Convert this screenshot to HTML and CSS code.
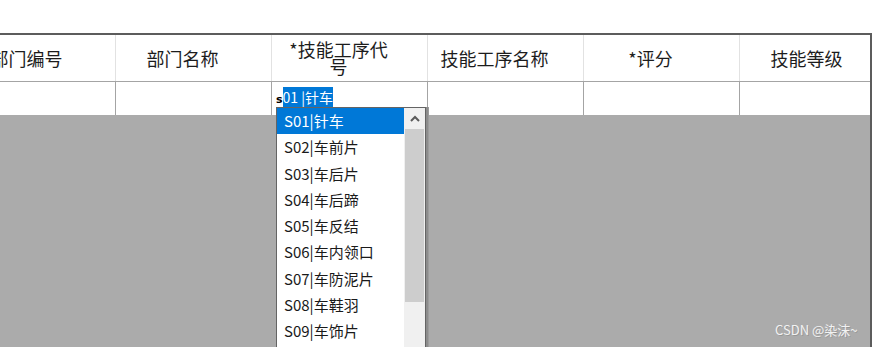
FILE: index.html
```html
<!DOCTYPE html>
<html lang="zh-CN">
<head>
<meta charset="utf-8">
<title>技能工序</title>
<link rel="stylesheet" href="styles.css">
</head>
<body>
<div class="top"></div>
<div class="grid">
  <div class="row head">
    <div class="cell"><span class="htext">部门编号</span></div>
    <div class="cell"><span class="htext">部门名称</span></div>
    <div class="cell"><span class="htext two"><span class="line">*技能工序代</span><span class="line">号</span></span></div>
    <div class="cell"><span class="htext">技能工序名称</span></div>
    <div class="cell"><span class="htext">*评分</span></div>
    <div class="cell"><span class="htext">技能等级</span></div>
  </div>
  <div class="row data">
    <div class="cell"></div>
    <div class="cell"></div>
    <div class="cell edit"><span class="typed">s</span><span class="sel">01 |针车</span></div>
    <div class="cell"></div>
    <div class="cell"></div>
    <div class="cell"></div>
  </div>
  <div class="dropdown">
    <ul class="list">
      <li class="item active">S01|针车</li>
      <li class="item">S02|车前片</li>
      <li class="item">S03|车后片</li>
      <li class="item">S04|车后蹄</li>
      <li class="item">S05|车反结</li>
      <li class="item">S06|车内领口</li>
      <li class="item">S07|车防泥片</li>
      <li class="item">S08|车鞋羽</li>
      <li class="item">S09|车饰片</li>
    </ul>
    <div class="scrollbar">
      <div class="up">
        <svg width="10" height="7" viewBox="0 0 10 7"><polyline points="1,6 5,2 9,6" fill="none" stroke="#5a5a5a" stroke-width="2"/></svg>
      </div>
      <div class="thumb"></div>
    </div>
  </div>
  <div class="watermark">CSDN @染沫~</div>
</div>
</body>
</html>
```

FILE: styles.css
```css
html, body {
  margin: 0;
  padding: 0;
}
body {
  width: 873px;
  height: 347px;
  overflow: hidden;
  background: #ffffff;
  font-family: "Noto Sans CJK SC", "Noto Sans", sans-serif;
}
.top {
  height: 33px;
  background: #ffffff;
}
.grid {
  position: relative;
  width: 872px;
  height: 314px;
  box-sizing: border-box;
  border-top: 2px solid #5c5c5c;
  border-right: 2px solid #5c5c5c;
  background: #ababab;
  overflow: hidden;
}
.row {
  display: flex;
  margin-left: -40px;
  background: #ffffff;
}
.cell {
  flex: 0 0 156px;
  box-sizing: border-box;
}
.head {
  height: 47px;
  border-bottom: 1px solid #a4a4a4;
  box-sizing: border-box;
}
.head .cell {
  border-right: 1px solid #e2e2e2;
  display: flex;
  align-items: center;
  justify-content: center;
  padding-right: 22px;
  padding-left: 0;
}
.htext {
  font-size: 18px;
  line-height: 18px;
  color: #1c1c1c;
  text-align: center;
  white-space: nowrap;
}
.htext.two {
  display: flex;
  flex-direction: column;
  align-items: center;
  margin-top: -1px;
}
.line {
  display: block;
  height: 17px;
  line-height: 17px;
}
.data {
  height: 33px;
}
.data .cell {
  border-right: 1px solid #a4a4a4;
}
.edit {
  padding-left: 4px;
  padding-top: 7px;
  font-size: 14px;
  line-height: 16px;
  white-space: pre;
}
.typed {
  color: #000000;
  font-family: "DejaVu Sans", sans-serif;
  font-size: 11px;
  font-weight: bold;
}
.sel {
  background: #0078d7;
  color: #ffffff;
}
.dropdown {
  position: absolute;
  left: 276px;
  top: 72px;
  width: 150px;
  height: 260px;
  box-sizing: border-box;
  border: 1px solid #646464;
  background: #ffffff;
  display: flex;
  box-shadow: 2px 0 0 #8c8c8c, 3px 0 0 #9c9c9c;
}
.list {
  list-style: none;
  margin: 0;
  padding: 0;
  width: 127px;
}
.item {
  height: 26.25px;
  line-height: 26px;
  padding-left: 7px;
  font-size: 15px;
  color: #1a1a1a;
  white-space: nowrap;
}
.item.active {
  background: #0078d7;
  color: #ffffff;
}
.scrollbar {
  width: 21px;
  background: #f0f0f0;
  display: flex;
  flex-direction: column;
}
.up {
  height: 21px;
  display: flex;
  align-items: center;
  justify-content: center;
}
.thumb {
  margin: 0 1px;
  height: 173px;
  background: #cdcdcd;
}
.watermark {
  position: absolute;
  left: 775px;
  top: 285px;
  font-size: 13px;
  color: #f2f2f2;
  text-shadow: 1px 1px 0 rgba(0, 0, 0, 0.12);
  white-space: nowrap;
}
```
